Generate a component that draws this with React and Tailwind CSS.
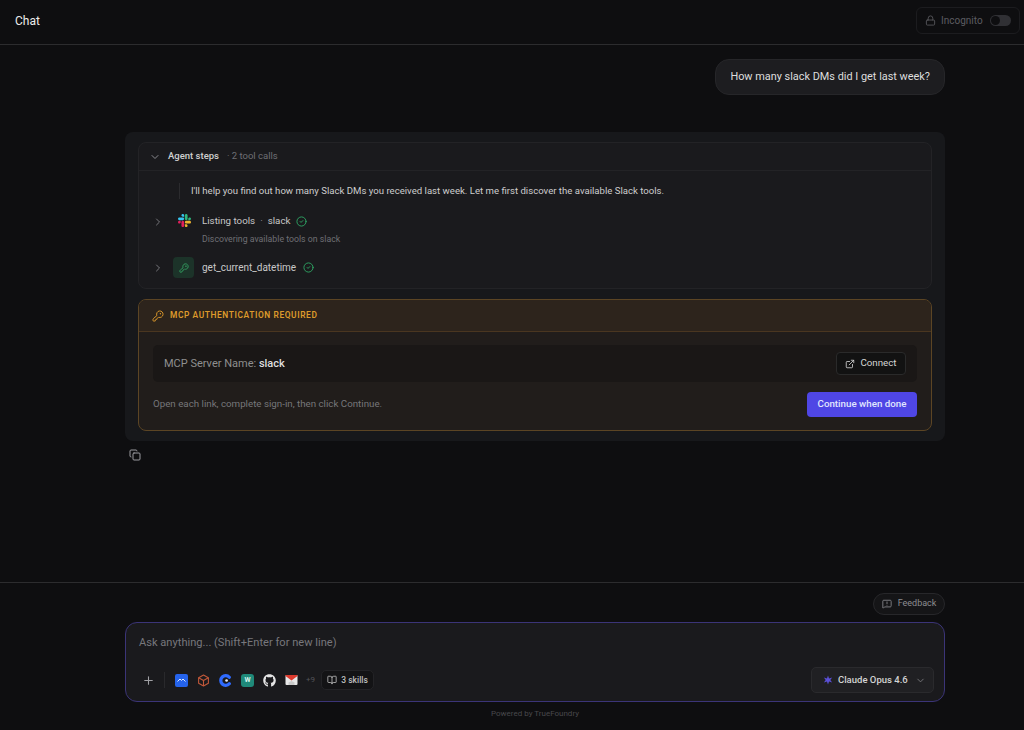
import { ChevronDown, ChevronRight, CircleCheck, Copy, ExternalLink, KeyRound, Lock, MessageSquareWarning, Plus, BookOpen } from 'lucide-react';
import { FaGithub } from 'react-icons/fa';

function SlackLogo() {
  return (
    <svg width="13" height="13" viewBox="0 0 122.800 122.800">
      <path fill="#e01e5a" d="M25.800 77.600c0 7.100-5.800 12.900-12.900 12.900S0 84.700 0 77.600s5.800-12.900 12.900-12.900h12.900v12.900zm6.500 0c0-7.100 5.800-12.900 12.900-12.900s12.900 5.800 12.900 12.900v32.300c0 7.100-5.800 12.900-12.900 12.900s-12.900-5.800-12.900-12.900V77.600z" />
      <path fill="#36c5f0" d="M45.200 25.800c-7.100 0-12.900-5.800-12.900-12.900S38.100 0 45.200 0s12.900 5.800 12.900 12.900v12.900H45.200zm0 6.500c7.100 0 12.900 5.800 12.900 12.900s-5.800 12.900-12.900 12.900H12.900C5.800 58.100 0 52.300 0 45.200s5.800-12.900 12.900-12.900h32.300z" />
      <path fill="#2eb67d" d="M97 45.200c0-7.100 5.800-12.900 12.900-12.900s12.900 5.800 12.900 12.900-5.800 12.900-12.900 12.900H97V45.200zm-6.500 0c0 7.100-5.800 12.900-12.900 12.900s-12.900-5.800-12.900-12.900V12.900C64.700 5.800 70.500 0 77.600 0s12.900 5.800 12.900 12.900v32.300z" />
      <path fill="#ecb22e" d="M77.600 97c7.100 0 12.900 5.800 12.900 12.900s-5.800 12.900-12.900 12.900-12.900-5.800-12.900-12.900V97h12.900zm0-6.500c-7.100 0-12.900-5.800-12.900-12.900s5.800-12.900 12.900-12.900h32.300c7.100 0 12.900 5.800 12.900 12.900s-5.800 12.900-12.900 12.900H77.600z" />
    </svg>
  );
}

function ToolIcons() {
  return (
    <div className="flex items-center gap-[9px]">
      <div className="w-[13px] h-[13px] rounded-[2px] bg-[#2563eb] flex items-center justify-center">
        <svg width="9" height="6" viewBox="0 0 9 6" fill="none" stroke="#dbeafe" strokeWidth="1">
          <path d="M0.500 4.500 3 2l1.500 1.500L6 2l2.500 2.500" />
        </svg>
      </div>
      <svg width="13" height="13" viewBox="0 0 24 24" fill="none" stroke="#c2583a" strokeWidth="2" strokeLinejoin="round">
        <path d="M12 2 21 7v10l-9 5-9-5V7z" />
        <path d="M3 7l9 5 9-5M12 12v10" />
      </svg>
      <svg width="13" height="13" viewBox="0 0 24 24" fill="none">
        <path d="M19 6A9 9 0 1 0 19 18" stroke="#2f6bff" strokeWidth="6" strokeLinecap="round" />
        <circle cx="14" cy="12" r="2.500" fill="#e8eeff" />
      </svg>
      <div className="w-[13px] h-[13px] rounded-[3px] bg-[#1f8a7a] flex items-center justify-center text-[7px] font-bold text-[#d5f5ec]">W</div>
      <FaGithub size={13} className="text-[#e5e5e5]" />
      <svg width="13" height="10" viewBox="0 0 12 10">
        <rect width="12" height="10" rx="1" fill="#e8e8e8" />
        <path d="M0 1 6 5.500 12 1V0H0z" fill="#dc3a2e" />
        <path d="M3 10h6V7.500L6 6 3 7.500z" fill="#c9c9c9" />
      </svg>
    </div>
  );
}

export default function App() {
  return (
    <div className="h-[730px] w-full bg-[#0e0e10] text-[#e5e5e5] font-['Roboto',sans-serif] overflow-hidden flex flex-col">
      <header className="h-[45px] shrink-0 flex items-center justify-between pl-[15px] pr-[4px] pb-[3px] border-b border-[#2c2c2e]">
        <span className="text-[12px] text-[#ececec]">Chat</span>
        <div className="flex items-center gap-[5px] h-[27px] w-[104px] pl-[8px] rounded-[6px] border border-[#1c1c1f]">
          <Lock size={11} className="text-[#55555a]" />
          <span className="text-[10px] text-[#5c5c61]">Incognito</span>
          <div className="ml-[2px] w-[21px] h-[11px] rounded-full bg-[#303034] flex items-center pl-[1px]">
            <div className="w-[9px] h-[9px] rounded-full bg-[#0e0e10]" />
          </div>
        </div>
      </header>

      <main className="flex-1 flex flex-col w-[820px] ml-[125px] pt-[14px]">
        <div className="self-end h-[36px] px-[14px] flex items-center rounded-[14px] bg-[#1d1d20] border border-[#262629] text-[10.900px] text-[#dedede]">
          How many slack DMs did I get last week?
        </div>

        <div className="mt-[37px] rounded-[8px] bg-[#17181b] px-[13px] pt-[10px] pb-[10px] flex flex-col gap-[10px]">
          <section className="rounded-[8px] border border-[#232326] bg-[#1a1a1d]">
            <div className="h-[28px] flex items-center pl-[10px] border-b border-[#232326]">
              <ChevronDown size={12} className="text-[#8a8a8f]" />
              <span className="ml-[7px] text-[9.500px] font-medium text-[#cfcfcf]">Agent steps</span>
              <span className="ml-[8px] text-[9.500px] text-[#6f6f74]">· 2 tool calls</span>
            </div>
            <div className="pt-[12px] pb-[10px] flex flex-col">
              <div className="ml-[40px] pl-[11px] h-[16px] flex items-center border-l border-[#2b2b2e] text-[9.600px] text-[#cdcdcd]">
                I'll help you find out how many Slack DMs you received last week. Let me first discover the available Slack tools.
              </div>
              <div className="mt-[15px] flex items-start pl-[13px]">
                <ChevronRight size={12} className="text-[#77777c] mt-[2px]" />
                <div className="ml-[10px] w-[20px] flex justify-center"><SlackLogo /></div>
                <div className="ml-[8px] flex flex-col">
                  <div className="flex items-center text-[9.750px] text-[#c8c8c8] h-[15px]">
                    <span>Listing tools</span>
                    <span className="mx-[5px] text-[#9a9a9f]">·</span>
                    <span>slack</span>
                    <CircleCheck size={11} className="ml-[6px] text-[#2fa866]" />
                  </div>
                  <span className="mt-[4px] text-[8.750px] text-[#6f6f74]">Discovering available tools on slack</span>
                </div>
              </div>
              <div className="mt-[11px] flex items-center pl-[13px]">
                <ChevronRight size={12} className="text-[#77777c]" />
                <div className="ml-[9px] w-[21px] h-[21px] rounded-[4px] bg-[#1c3329] flex items-center justify-center">
                  <KeyRound size={10} className="text-[#37a868]" />
                </div>
                <span className="ml-[8px] text-[10px] text-[#c8c8c8]">get_current_datetime</span>
                <CircleCheck size={11} className="ml-[7px] text-[#2fa866]" />
              </div>
            </div>
          </section>

          <section className="rounded-[8px] border border-[#5c4524] bg-[#211d1b]">
            <div className="h-[32px] flex items-center pl-[13px] gap-[6px] bg-[#2d241c] rounded-t-[7px] border-b border-[#4a3620]">
              <KeyRound size={12} className="text-[#d9962a]" />
              <span className="text-[8.400px] font-semibold tracking-[0.070em] text-[#dc9a2b]">MCP AUTHENTICATION REQUIRED</span>
            </div>
            <div className="px-[14px] pt-[13px] pb-[13px] flex flex-col">
              <div className="h-[37px] flex items-center justify-between rounded-[5px] bg-[#1a1716] pl-[11px] pr-[11px]">
                <span className="pt-[2px] text-[11px] text-[#8f8f8f]">MCP Server Name: <span className="font-medium text-[#dedede]">slack</span></span>
                <button className="h-[23px] w-[70px] flex items-center justify-center gap-[5px] rounded-[4px] bg-[#121212] border border-[#2a2a2a] text-[9.750px] text-[#d4d4d4]">
                  <ExternalLink size={10} />
                  Connect
                </button>
              </div>
              <div className="mt-[10px] flex items-center justify-between">
                <span className="text-[9.750px] text-[#77777a]">Open each link, complete sign-in, then click Continue.</span>
                <button className="h-[25px] w-[110px] rounded-[4px] bg-[#4f46e5] text-[9.750px] font-medium text-[#e0e7ff]">Continue when done</button>
              </div>
            </div>
          </section>
        </div>

        <Copy size={12} className="mt-[8px] ml-[4px] text-[#9a9a9f]" />
      </main>

      <footer className="shrink-0 h-[148px] border-t border-[#2c2c2e] flex flex-col">
        <div className="w-[820px] ml-[125px] flex flex-col">
          <button className="self-end mt-[10px] h-[22px] w-[72px] flex items-center justify-center gap-[6px] rounded-full border border-[#27272a] bg-[#151517] text-[9px] text-[#8d8d91]">
            <MessageSquareWarning size={10} />
            Feedback
          </button>
          <div className="mt-[7px] h-[80px] rounded-[12px] border border-[#3b3478] bg-[#1a1a1d] flex flex-col pl-[13px] pr-[10px]">
            <span className="mt-[12px] text-[11.100px] text-[#77777c]">Ask anything... (Shift+Enter for new line)</span>
            <div className="mt-auto mb-[8px] flex items-center justify-between">
              <div className="flex items-center">
                <Plus size={13} className="ml-[3px] text-[#a1a1a5]" />
                <div className="ml-[9px] mr-[10px] h-[16px] w-px bg-[#29292c]" />
                <ToolIcons />
                <span className="ml-[8px] text-[8px] text-[#55555a]">+9</span>
                <div className="ml-[6px] h-[20px] w-[53px] flex items-center justify-center gap-[4px] rounded-[5px] bg-[#131315] border border-[#232326] text-[8.500px] font-medium text-[#bdbdbd]">
                  <BookOpen size={10} />
                  3 skills
                </div>
              </div>
              <div className="h-[26px] w-[123px] flex items-center pl-[11px] gap-[5px] rounded-[5px] bg-[#202023] border border-[#2a2a2d]">
                <svg width="10" height="10" viewBox="0 0 24 24" fill="#5b50d6">
                  <path d="M12 1l2.500 7.500L22 6l-4.500 6L22 18l-7.500-2.500L12 23l-2.500-7.500L2 18l4.500-6L2 6l7.500 2.500z" />
                </svg>
                <span className="text-[9.500px] font-medium text-[#d4d4d4]">Claude Opus 4.6</span>
                <ChevronDown size={11} className="ml-[2px] text-[#77777c]" />
              </div>
            </div>
          </div>
          <div className="mt-[6px] text-center text-[8px] text-[#48484c]">Powered by TrueFoundry</div>
        </div>
      </footer>
    </div>
  );
}
